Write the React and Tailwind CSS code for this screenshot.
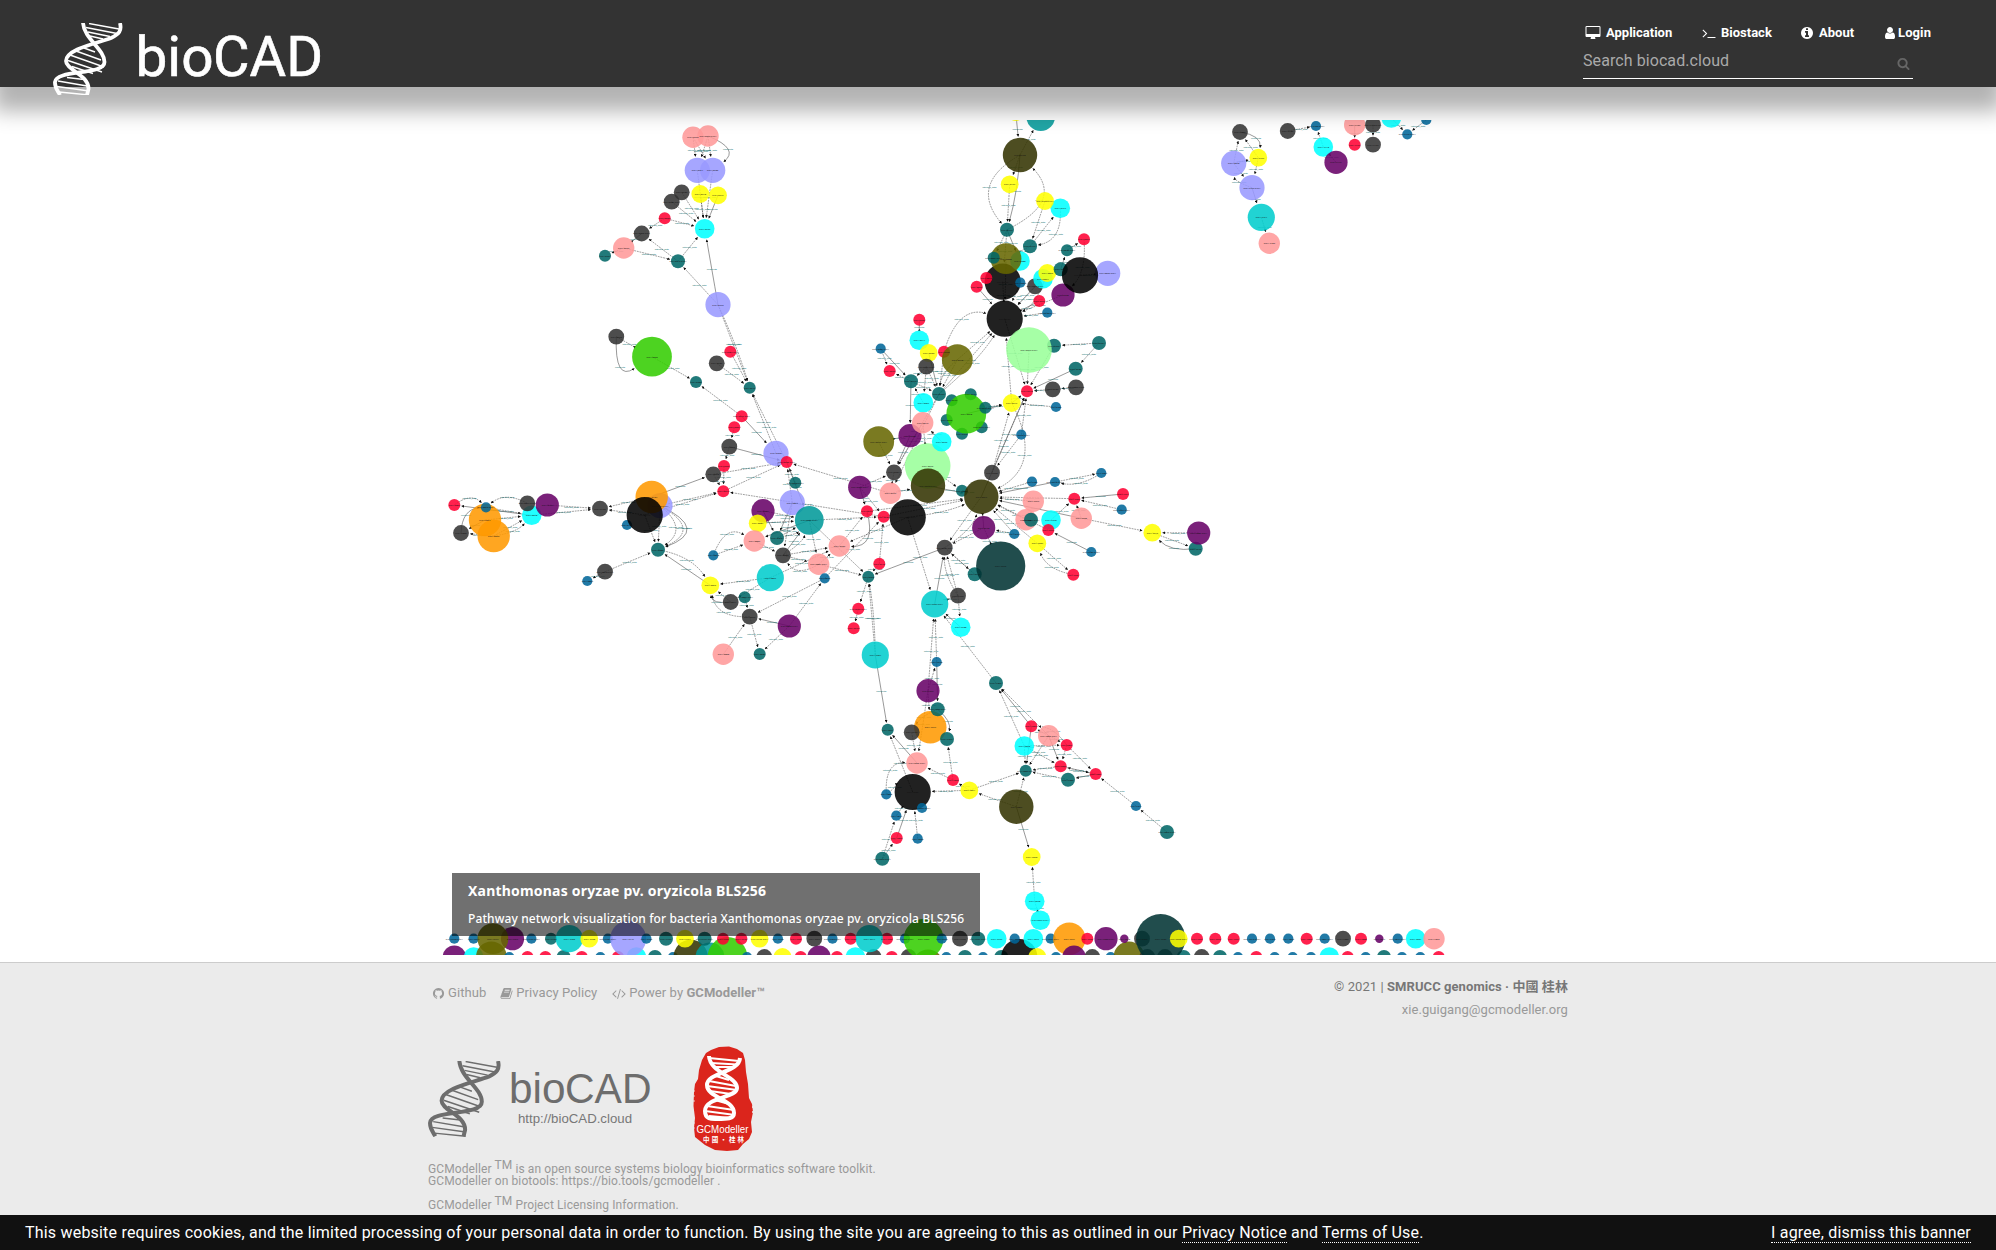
import React from "react";

const KINDS = {
  b: ["#006699", 5.1],
  r: ["#ff0033", 6],
  t: ["#006666", 6],
  T: ["#006666", 7],
  g: ["#333333", 7.9],
  y: ["#ffff00", 8.9],
  c: ["#00ffff", 9.8],
  p: ["#ff9999", 10.7],
  u: ["#660066", 11.6],
  l: ["#9999ff", 12.6],
  q: ["#00cccc", 13.6],
  e: ["#009999", 14.4],
  v: ["#666600", 15.4],
  o: ["#ff9900", 16.2],
  n: ["#333300", 17.2],
  k: ["#000000", 18.1],
  G: ["#33cc00", 19.9],
  L: ["#99ff99", 22.8],
  D: ["#003333", 24.6],
  s: ["#660066", 4.2],
  M: ["#9999ff", 18],
};

const NODES = `
p 693 137.3|p 708 136|l 697.3 170.3|l 712.7 170.3|g 681.7 192.3|g 671.7 201.7|y 700.3 194|y 718 195.3|r 664.7 218.3
g 641.7 233.5|c 704.7 228.7|p 623.7 248|t 605 255.7|T 678 261.3|l 718 304.7|g 616.3 336.7|G 652 356.7|r 730.3 351.7
g 716.7 363.3|t 696 382|t 749.7 387.7|r 741.7 416.3|r 734.3 427.3|g 729.3 446.7|l 776 453.3|r 786.7 462|g 713.3 474.3|r 724 466
r 723.3 491.3|t 795.3 482.7|u 763 510.7|l 792.3 502.7|y 757.7 523.3|e 809.3 520.3|p 754.3 541|T 777 538|g 783 555.3
p 818.7 564.3|b 824.7 578.3|b 713.3 555.3|q 770.3 577.7|t 744.7 597.3|g 730.7 602|y 710.3 585.3|g 749.7 616.7|u 789.3 626
p 723.3 654.3|t 759.7 654|T 658 549.7|g 605 571.7|b 587.3 581|r 454.3 505|o 485 520|b 486 507.3|o 493.7 536|g 461 533
c 531.7 515.3|g 527.3 503.3|u 547.3 505|g 600 508.7|b 627 525|l 660 505.7|o 651.7 497|k 644.7 515
y 1015.7 112|e 1040.7 116.5|n 1020 155|y 1009.7 184.3|c 1060.3 208.3|y 1045 201|T 1007 229.7|T 1030 246.3|r 1084 239.3|t 1067 250.3
k 1002.7 281.7|c 1020 261|v 1006 258.7|t 993.7 257.7|r 986.3 278|b 1020.3 282.7|r 976.7 286.7|g 1035 286.3|c 1043 278.7|y 1047.3 273
T 1060.7 269.3|l 1107.7 273.3|u 1063 295|k 1080 275.3|r 1039.3 301|b 1047.3 312.7|k 1004.7 318.7|r 919.3 319.7|c 919.3 340.3
b 880.7 348.7|y 928.7 353|r 944 351.7|v 957.3 359.7|g 926.3 366.7|r 889.7 371|T 911 381.3|T 1054 345.7|L 1029 350|T 1099 343
T 1075.7 368.7|g 1052.7 389.3|g 1076 387.3|r 1027 391.3|y 1011.7 403|b 1056 407|b 1021.3 434.7|T 939 394|t 951.7 400.3|t 970.7 394.3
t 981.7 427.3|t 962 433.7|t 946.7 420|G 966.3 413.7|t 985.3 407.7|c 923.3 402.7|u 910 435.7|p 922.7 422.7|v 878.7 441.7
g 894 472.3|L 927.7 466|c 941.7 441.7|n 928 485.7|g 992 472.7|t 962 490.7|n 981.3 496.7|u 859.7 487.3|p 890.3 493.3|r 867 511.3
r 883.7 516.7|k 907.7 517.3|p 839.3 546|r 879.3 563.7|t 868.3 576.7|r 858.3 608.7|r 853.7 628.3|u 983.7 527.7|b 1014.3 534
g 944.7 547.7|T 974.7 574.3|D 1000.7 566|g 958 595.7|q 934.7 604|c 960.7 627.3|q 875.3 655|b 1032 481.7|b 1055 482|b 1101.3 473
r 1074.3 498.7|r 1123 494|b 1121.7 509.7|p 1033.3 501.3|p 1026 519.7|c 1051 520|T 1031 519.7|r 1048.3 530|p 1081.3 518.3
y 1037.3 543.3|b 1091.3 552|r 1073.3 574.7|y 1152.3 532.7|T 1195.7 548.7|u 1198.7 533
b 936.7 662|u 928 690.7|o 930.3 727.3|T 937.7 709.3|g 911.7 732.3|T 947 739|t 887.7 729.7|p 917 763|r 953 780|k 912.7 792
b 886.3 794.3|b 922 808|b 896.3 815.7|b 917.7 838.7|r 896.7 838|T 882.3 858.7|y 969.3 790.3|T 996 683|r 1031.3 726.3|p 1048.7 735.7
c 1024.3 746|r 1066.7 745|r 1060.7 766.3|t 1025.7 770.7|T 1068 779.7|r 1095.7 774|b 1136 806|T 1167 832|n 1016.3 806.7
y 1031.7 857|c 1034.7 901.3|c 1040.3 920.3
g 1240 132|l 1233.7 163.3|y 1258.3 157.7|l 1252 187.7|q 1261.3 217.3|p 1269.3 243.3|g 1287.7 131|b 1316 126|c 1323.3 147
u 1336 162.3|p 1354.7 124.7|g 1373 124.7|r 1354.7 144.7|g 1373 144.7|c 1391.3 118|b 1407.3 134.3|b 1426.3 120
u 454.3 957|c 473.6 957|v 491.4 957|b 509.3 957|r 527.5 957|r 545.4 957|T 563.6 957|r 581.8 957|b 600.4 957|r 618 957
c 636.4 957|T 655 957|b 673 957|n 690.7 957|e 710 957|G 727.5 957|b 747 957|g 764.3 957|y 782.5 957|r 800.7 957|u 819 957
r 837 957|c 855.4 957|g 873.6 957|r 891.8 957|g 908.6 957|v 928 965|b 946.4 957|T 965 957|b 983 957|T 1001.3 957|k 1019.3 957
y 1037.3 957|b 1056 957|g 1092.3 957|b 1110.7 957|v 1129 957|g 1147.3 957|g 1165 957|T 1183.7 957|g 1201.7 957
T 1220 957|b 1238 957|r 1256.3 957|b 1274.7 957|b 1292.7 957|b 1311 957|c 1329.3 957|r 1347.7 957|b 1365.7 957|T 1384 957
b 1402 957|b 1420.3 957|r 1438.7 957
b 454.3 938.7|b 473.6 938.7|u 512.5 938.7|v 492.9 938.7|b 531.4 938.7|t 551 938.7|q 569.3 938.7|y 589.3 938.7|b 607.9 938.7
M 628.2 938.7|b 646.4 938.7|T 666 938.7|T 704.6 938.7|y 685 938.7|r 723 938.7|r 741.4 938.7|y 759.6 938.7|b 777.9 938.7|r 796 938.7
g 814.3 938.7|b 832.5 938.7|r 850.7 938.7|r 887 938.7|q 869.3 938.7|b 905 938.7|G 923.6 938.7|b 941.8 938.7|g 960 938.7|T 978.2 938.7
c 996.7 938.7|b 1014.7 938.7|c 1033.3 938.7|b 1050.7 938.7|o 1069.3 938.7|r 1087.3 938.7|u 1074 957|u 1106 938.7|s 1124.3 938.7
g 1142 938.7|D 1160.7 938.7|y 1178.7 938.7|r 1197 938.7|r 1215.3 938.7|r 1233.7 938.7|b 1252 938.7|b 1270 938.7|b 1288.3 938.7
r 1306.7 938.7|b 1324.7 938.7|g 1343 938.7|r 1361 938.7|s 1379.3 938.7|b 1397.7 938.7|c 1415.7 938.7|p 1434 938.7`
  .trim()
  .split(/[|\n]/)
  .map((s) => {
    const [kind, x, y] = s.trim().split(" ");
    return { fill: KINDS[kind][0], r: KINDS[kind][1], x: +x, y: +y };
  });

/* from x, from y, to x, to y, bend */
const EDGES = `
693 137 697 170|708 136 713 170|708 136 697 170|708 136 713 170 -30|693 137 713 170|697 170 705 229|713 170 705 229|700 194 705 229
718 195 705 229|682 192 705 229|672 202 705 229|665 218 705 229|665 218 642 233|642 233 624 248|624 248 605 256|624 248 678 261
678 261 642 233|678 261 705 229|718 305 705 229|718 305 678 261|718 305 750 388|718 305 750 388 -3|616 337 652 357|616 337 652 357 40
652 357 696 382|730 352 750 388|717 363 750 388|742 416 696 382|742 416 776 453|776 453 750 388|787 462 750 388|734 427 729 447
729 447 724 466|729 447 787 462|713 474 787 462|723 491 787 462|724 466 723 491|713 474 723 491|652 497 713 474|660 506 723 491
645 515 723 491|795 483 787 462|792 503 787 462|787 462 809 520|890 493 787 462|884 517 723 491|454 505 486 507 -14|527 503 486 507 14
461 533 486 507 -16|486 507 532 515|485 520 532 515|494 536 532 515 8|494 536 532 515|532 515 454 505|532 515 600 509|547 505 600 509
645 515 600 509|652 497 600 509|485 520 461 533|494 536 461 533|660 506 658 550|660 506 658 550 -44|660 506 658 550 -30|660 506 658 550 -52
645 515 658 550|605 572 658 550|605 572 587 581|658 550 710 585 -14|710 585 658 550|770 578 710 585|770 578 731 602|731 602 710 585
750 617 710 585 -22|731 602 710 585 -14|745 597 750 617|825 578 750 617|723 654 750 617|750 617 760 654|789 626 750 617|789 626 760 654
789 626 825 578|713 555 754 541|713 555 754 541 -26|763 511 777 538|763 511 809 520|758 523 809 520|777 538 809 520|777 538 809 520 6
783 555 809 520|783 555 809 520 8|783 555 819 564|819 564 783 555 -18|754 541 783 555|792 503 777 538|792 503 783 555|809 520 819 564
809 520 884 517|809 520 868 577|809 520 754 541|770 578 839 546|783 555 839 546|819 564 839 546|839 546 867 511|867 511 839 546 -30
819 564 868 577|825 578 884 517|860 487 894 472|860 487 884 517|860 487 867 511|879 564 884 517|879 564 868 577|907 517 839 546
907 517 935 604|945 548 868 577|868 577 858 609|858 609 854 628|875 655 868 577|875 655 868 577 3|875 655 888 730|884 517 981 497
867 511 981 497|907 517 981 497 6|890 493 928 486|928 486 981 497|894 472 890 493|962 491 981 497|928 466 962 491|879 442 894 472
910 436 894 472|923 423 894 472|939 394 894 472|939 394 890 493|910 436 879 442|911 381 910 436|923 423 928 466|942 442 923 423
923 403 911 381|911 381 939 394|881 349 911 381|881 349 890 371|911 381 890 371|926 367 911 381|926 367 939 394|929 353 939 394
944 352 939 394|957 360 939 394|957 360 939 394 8|926 367 923 403|919 320 919 340|957 360 1005 319|939 394 1005 319|939 394 1005 319 8
944 352 1005 319 -34|966 414 1012 403|985 408 1012 403|1012 403 1005 319|1029 350 1027 391|1054 346 1027 391|1076 369 1027 391
1099 343 1054 346|1099 343 1076 369|1053 389 1027 391|1076 387 1053 389|1012 403 1027 391|1056 407 1012 403|1021 435 992 473
1021 435 1027 391|992 473 1027 391|981 497 1027 391|992 473 1012 403|1012 403 981 497 -50|1005 319 1027 391|1020 155 1010 184
1016 112 1020 155|1020 155 1041 116|1020 155 1007 230 46|1007 230 1020 155 52|1010 184 1007 230|1020 155 1007 230 -4|1045 201 1030 246
1030 246 1060 208|1060 208 1030 246 -22|1007 230 1003 282|1007 230 1020 261|1030 246 1006 259|1007 230 994 258|1003 282 1005 319
1006 259 1005 319|977 287 1005 319|1020 283 1005 319|1035 286 1005 319|1043 279 1005 319|1047 273 1005 319 -14|1061 269 1067 250
1067 250 1084 239|1084 239 1063 295 -14|1080 275 1108 273|1063 295 1005 319|1039 301 1005 319|1047 313 1005 319|981 497 945 548
945 548 981 497 12|984 528 945 548|984 528 981 497|1014 534 984 528|945 548 975 574|975 574 945 548|984 528 1001 566|935 604 945 548
958 596 945 548|958 596 945 548 -8|958 596 935 604|958 596 961 627|961 627 935 604|928 691 935 604|937 662 935 604|996 683 935 604
928 691 937 662|937 662 938 709|928 691 930 727|928 691 917 763|912 732 917 763|938 709 912 732 6|938 709 947 739 -10|953 780 947 739
953 780 917 763|969 790 953 780|969 790 913 792|917 763 888 730|913 792 888 730|886 794 917 763 -24|886 794 913 792 -8|896 816 913 792
897 838 913 792|918 839 913 792|882 859 897 838|882 859 896 816|1032 482 981 497|1055 482 981 497|1055 482 1101 473|1101 473 1055 482 -10
1033 501 981 497|1074 499 981 497|1123 494 1074 499|1122 510 1074 499|1026 520 981 497|1051 520 1074 499|1081 518 1074 499
1081 518 981 497|1081 518 1152 533|1048 530 981 497|1037 543 981 497|1014 534 981 497|1091 552 1048 530|1037 543 1073 575
1073 575 1037 543 -14|1199 533 1152 533|1152 533 1196 549|1196 549 1152 533 -12|969 790 1026 771|1016 807 969 790|1016 807 1026 771
1024 746 996 683|1031 726 996 683|1049 736 996 683|1049 736 1031 726|1067 745 1031 726 10|1049 736 1067 745|1049 736 1061 766
1049 736 1026 771|1024 746 1061 766|1024 746 1067 745|1024 746 1026 771|1031 726 1026 771|1067 745 1061 766|1061 766 1026 771
1068 780 1026 771|1096 774 1061 766|1096 774 1068 780|1067 745 1096 774|1061 766 1096 774|1136 806 1096 774|1167 832 1136 806
1016 807 1032 857|1035 901 1032 857|1035 901 1040 920|1234 163 1240 132|1258 158 1240 132|1240 132 1258 158 -16|1234 163 1258 158
1234 163 1252 188|1252 188 1234 163 -10|1258 158 1252 188|1252 188 1261 217|1261 217 1269 243|1288 131 1316 126|1323 147 1316 126
1336 162 1323 147|1355 125 1355 145|1373 125 1373 145|1391 118 1407 134|1426 120 1407 134`
  .trim()
  .split(/[|\n]/)
  .map((s) => s.trim().split(" ").map(Number));

function nearest(x, y) {
  let best = NODES[0];
  let d = Infinity;
  for (const n of NODES) {
    const k = (n.x - x) ** 2 + (n.y - y) ** 2;
    if (k < d) {
      d = k;
      best = n;
    }
  }
  return best;
}

const labelFits = (y) => y > 124 && y < 951;

function Edge({ edge, index }) {
  const [x1, y1, x2, y2, bend = 0] = edge;
  const a = nearest(x1, y1);
  const b = nearest(x2, y2);
  const dx = b.x - a.x;
  const dy = b.y - a.y;
  const len = Math.hypot(dx, dy) || 1;
  const cx = (a.x + b.x) / 2 + (dy / len) * -bend;
  const cy = (a.y + b.y) / 2 + (dx / len) * bend;
  const ex = b.x - cx;
  const ey = b.y - cy;
  const el = Math.hypot(ex, ey) || 1;
  const tx = b.x - (ex / el) * (b.r + 1.5);
  const ty = b.y - (ey / el) * (b.r + 1.5);
  const lx = (a.x + 2 * cx + tx) / 4;
  const ly = (a.y + 2 * cy + ty) / 4;
  const solid = index % 5 === 3;
  return (
    <g>
      <path
        d={`M${a.x} ${a.y}Q${cx} ${cy} ${tx} ${ty}`}
        fill="none"
        stroke="#444"
        strokeWidth="0.55"
        strokeDasharray={solid ? "none" : "1.8 0.9"}
        markerEnd="url(#tip)"
      />
      {labelFits(ly) && (
        <text x={lx} y={ly + 1} fontSize="2.5" textAnchor="middle" fill="#006666">
          {solid ? "connects" : "interact_with"}
        </text>
      )}
    </g>
  );
}

function Network() {
  return (
    <svg
      className="block h-[835px] w-[1010px] font-['Liberation_Sans',sans-serif]"
      viewBox="440 120 1010 835"
    >
      <defs>
        <marker id="tip" viewBox="0 0 4 4" refX="3.4" refY="2" markerWidth="2.9" markerHeight="2.9" markerUnits="userSpaceOnUse" orient="auto">
          <path d="M0 0L4 2L0 4Z" fill="#111" />
        </marker>
      </defs>
      {EDGES.map((e, i) => (
        <Edge key={i} edge={e} index={i} />
      ))}
      {NODES.map((n, i) => (
        <circle key={i} cx={n.x} cy={n.y} r={n.r} fill={n.fill} fillOpacity="0.87" />
      ))}
      {NODES.map(
        (n, i) =>
          labelFits(n.y) && (
            <text key={i} x={n.x} y={n.y + 0.9} fontSize="2.4" textAnchor="middle" fill="#111">
              {i % 4 === 1 ? "PWY" + (5000 + i * 7) + "-PWY" : "PWY-" + (5000 + i * 7)}
            </text>
          ),
      )}
    </svg>
  );
}

const ICONS = {
  desktop:
    "M1728 992v-832q0-13-9.5-22.5t-22.5-9.5h-1600q-13 0-22.5 9.5t-9.5 22.5v832q0 13 9.5 22.5t22.5 9.5h1600q13 0 22.5-9.5t9.5-22.5zm128-832v1088q0 66-47 113t-113 47h-544q0 37 16 77.5t32 71 16 43.5q0 26-19 45t-45 19h-512q-26 0-45-19t-19-45q0-14 16-44t32-70 16-78h-544q-66 0-113-47t-47-113v-1088q0-66 47-113t113-47h1600q66 0 113 47t47 113z",
  terminal:
    "M649 983l-466 466q-10 10-23 10t-23-10l-50-50q-10-10-10-23t10-23l393-393-393-393q-10-10-10-23t10-23l50-50q10-10 23-10t23 10l466 466q10 10 10 23t-10 23zm1079 457v64q0 14-9 23t-23 9h-960q-14 0-23-9t-9-23v-64q0-14 9-23t23-9h960q14 0 23 9t9 23z",
  info: "M1152 1376v-160q0-14-9-23t-23-9h-96v-512q0-14-9-23t-23-9h-320q-14 0-23 9t-9 23v160q0 14 9 23t23 9h96v320h-96q-14 0-23 9t-9 23v160q0 14 9 23t23 9h448q14 0 23-9t9-23zm-128-896v-160q0-14-9-23t-23-9h-192q-14 0-23 9t-9 23v160q0 14 9 23t23 9h192q14 0 23-9t9-23zm640 416q0 209-103 385.5t-279.5 279.5-385.5 103-385.5-103-279.5-279.5-103-385.5 103-385.5 279.5-279.5 385.5-103 385.5 103 279.5 279.5 103 385.5z",
  user: "M1536 1399q0 109-62.5 187t-150.5 78h-854q-88 0-150.5-78t-62.5-187q0-85 8.5-160.5t31.5-152 58.5-131 94-89 134.5-34.5q131 128 313 128t313-128q76 0 134.5 34.5t94 89 58.5 131 31.5 152 8.5 160.5zm-256-887q0 159-112.5 271.5t-271.5 112.5-271.5-112.5-112.5-271.5 112.5-271.5 271.5-112.5 271.5 112.5 112.5 271.5z",
  search:
    "M1216 832q0-185-131.5-316.5t-316.5-131.5-316.5 131.5-131.5 316.5 131.5 316.5 316.5 131.5 316.5-131.5 131.5-316.5zm512 832q0 52-38 90t-90 38q-54 0-90-38l-343-342q-179 124-399 124-143 0-273.5-55.5t-225-150-150-225-55.5-273.5 55.5-273.5 150-225 225-150 273.5-55.5 273.5 55.5 225 150 150 225 55.5 273.5q0 220-124 399l343 343q37 37 37 90z",
  github:
    "M896 128q209 0 385.5 103t279.5 279.5 103 385.5q0 251-146.5 451.5t-378.5 277.5q-27 5-40-7t-13-30q0-3 .5-76.5t.5-134.5q0-97-52-142 57-6 102.5-18t94-39 81-66.5 53-105 20.5-150.5q0-119-79-206 37-91-8-204-28-9-81 11t-92 44l-38 24q-93-26-192-26t-192 26q-16-11-42.5-27t-83.5-38.5-85-13.5q-45 113-8 204-79 87-79 206 0 85 20.5 150t52.5 105 80.5 67 94 39 102.5 18q-39 36-49 103-21 10-45 15t-57 5-65.5-21.5-55.5-62.5q-19-32-48.5-52t-49.5-24l-20-3q-21 0-29 4.5t-5 11.5 9 14 13 12l7 5q22 10 43.5 38t31.5 51l10 23q13 38 44 61.5t67 30 69.5 7 55.5-3.5l23-4q0 38 .5 88.5t.5 54.5q0 18-13 30t-40 7q-232-77-378.5-277.5t-146.5-451.5q0-209 103-385.5t279.5-279.5 385.5-103z",
  code: "M617 1399l-50 50q-10 10-23 10t-23-10l-466-466q-10-10-10-23t10-23l466-466q10-10 23-10t23 10l50 50q10 10 10 23t-10 23l-393 393 393 393q10 10 10 23t-10 23zm591-1067l-373 1291q-4 13-15.5 19.5t-23.5 2.5l-62-17q-13-4-19.5-15.5t-2.5-24.5l373-1291q4-13 15.5-19.5t23.5-2.5l62 17q13 4 19.5 15.5t2.5 24.5zm657 651l-466 466q-10 10-23 10t-23-10l-50-50q-10-10-10-23t10-23l393-393-393-393q-10-10-10-23t10-23l50-50q10-10 23-10t23 10l466 466q10 10 10 23t-10 23z",
  book: "M1703 478q40 57 18 129l-275 906q-19 64-76.5 107.5t-122.5 43.5h-923q-77 0-148.5-53.5t-99.5-131.5q-24-67-2-127 0-4 3-27t4-37q1-8-3-21.5t-3-19.5q2-11 8-21t16.5-23.5 16.5-23.5q23-38 45-91.5t30-91.5q3-10 .5-30t-.5-28q3-11 17-28t17-23q21-36 42-92t25-90q1-9-2.5-32t.5-28q4-13 22-30.5t22-22.5q19-26 42.5-84.5t27.5-96.5q1-8-3-25.5t-2-26.5q2-8 9-18t18-23 17-21q8-12 16.5-30.5t15-35 16-36 19.5-32 26.5-23.5 36-11.5 47.5 5.5l-1 3q38-9 51-9h761q74 0 114 56t18 130l-274 906q-36 119-71.5 153.5t-128.5 34.5h-869q-27 0-38 15-11 16-1 43 24 70 144 70h923q29 0 56-15.5t35-41.5l300-987q7-22 5-57 38 15 59 43zm-1064 2q-4 13 2 22.5t20 9.5h608q13 0 25.5-9.5t16.5-22.5l21-64q4-13-2-22.5t-20-9.5h-608q-13 0-25.5 9.5t-16.5 22.5zm-83 256q-4 13 2 22.5t20 9.5h608q13 0 25.5-9.5t16.5-22.5l21-64q4-13-2-22.5t-20-9.5h-608q-13 0-25.5 9.5t-16.5 22.5z",
};

function Icon({ name, className }) {
  return (
    <svg viewBox="0 0 1792 1792" className={"shrink-0 overflow-visible " + className} fill="currentColor">
      <path d={ICONS[name]} />
    </svg>
  );
}

function Helix({ color, bodyWidth = 3.8 }) {
  return (
    <g fill="none" stroke={color}>
      <g strokeWidth="1.4">
        <path d="M36 0.5L66 6M33 4.500L64 10.5M35 9L57 13.5M37 13L50 16" />
        <path d="M31 25L42 29M23 28L48 37M17 32L51 44M15 37.5L49 49M19 43.5L40 50.5" />
        <path d="M14 54.5L31 56.5M5 58L34 63M4 63.5L36 68M6 69L36 72" />
      </g>
      <g strokeWidth={bodyWidth}>
        <path d="M30 0C31 16 51.500 26 51.500 39C51.500 53 3 46 2 59C1.500 65 5 68 7 72" />
        <path d="M67 0C69 8 66 11 58 15C45 20 13 26 13 38C13 47 36 52 35.500 66L34 72" />
      </g>
    </g>
  );
}

function HeaderLogo() {
  return (
    <svg className="ml-[53px] mt-[23px] block h-[72px] w-[270px]" viewBox="0 0 270 72">
      <Helix color="#fff" />
      <text y="53" fontSize="56" fill="#fff" stroke="#fff" strokeWidth="0.6" className="font-['Roboto',sans-serif]">
        <tspan x="82.5" textLength="78" lengthAdjust="spacingAndGlyphs">bio</tspan>
        <tspan x="160" textLength="110" lengthAdjust="spacingAndGlyphs">CAD</tspan>
      </text>
    </svg>
  );
}

function FooterLogo() {
  return (
    <svg className="block h-[76px] w-[224px]" viewBox="0 0 224 76">
      <g transform="scale(1.045)">
        <Helix color="#6d6d6d" bodyWidth={3.8} />
      </g>
      <text y="41.5" fontSize="42" fill="#6d6d6d" className="font-['Liberation_Sans',sans-serif]">
        <tspan x="81" textLength="56.5" lengthAdjust="spacingAndGlyphs">bio</tspan>
        <tspan x="137" textLength="86.5" lengthAdjust="spacingAndGlyphs">CAD</tspan>
      </text>
      <text x="90" y="62" fontSize="12.500" textLength="114" lengthAdjust="spacingAndGlyphs" fill="#777" className="font-['Liberation_Sans',sans-serif]">
        http://bioCAD.cloud
      </text>
    </svg>
  );
}

function Seal() {
  return (
    <svg className="block h-[106px] w-[60px]" viewBox="0 0 60 106">
      <path
        d="M18 4L26 1L36 0.500L44 3L50 7L52 14L53 26L55 38L56 52L59 58L60 66L58 76L59 86L56 93L50 98L45 104L34 105L22 104L12 99L7 95L2 91L1 82L2 72L0.500 60L1 46L2 38L5 33L6 24L9 14L13 7Z"
        fill="#db251c"
      />
      <path d="M1 44V58M59.500 60V70M1 76V86" stroke="#ebebeb" strokeWidth="0.800" strokeDasharray="2 3" />
      <g fill="none" stroke="#fff" strokeWidth="1.900">
        <path d="M16 12L46 15M18 17L44 18.500M20 21L40 21M23 30L36 34M16 35L43 40M14 40L44 44M17 45L38 48M22 54L36 58M14 60L41 64M12 65L42 69M16 70L38 72" />
      </g>
      <g fill="none" stroke="#fff" strokeWidth="4">
        <path d="M16 10C17 27 44 30 44 42C44 52 12 51 12 65C12 74 20 73 24 73" />
        <path d="M47 12C46 27 14 26 14 39C14 52 41 53 41 67C41 73 34 73 24 73" />
      </g>
      <text x="3.5" y="87" fontSize="11" textLength="52" lengthAdjust="spacingAndGlyphs" fill="#fff" className="font-['Liberation_Sans',sans-serif]">
        GCModeller
      </text>
      <text x="10" y="96" fontSize="6.500" fontWeight="700" textLength="41" fill="#fff" className="font-['Noto_Sans_CJK_TC',sans-serif]">
        中國·桂林
      </text>
    </svg>
  );
}

function NavLink({ icon, label, gap, className }) {
  return (
    <a className={"flex items-center " + gap + " " + className}>
      <Icon name={icon} className="h-[14px] w-[14px]" />
      <span>{label}</span>
    </a>
  );
}

function Header() {
  return (
    <header className="relative z-10 flex h-[87px] items-start justify-between bg-[#333] shadow-[0_17px_20px_7px_rgba(0,0,0,0.3)]">
      <HeaderLogo />
      <div className="w-[413px] pt-[25px]">
        <nav className="flex h-4 text-[13px] leading-4 font-bold text-white">
          <NavLink icon="desktop" label="Application" gap="gap-[6px]" className="ml-[3px] w-[116px]" />
          <NavLink icon="terminal" label="Biostack" gap="gap-[5px]" className="w-[98px]" />
          <NavLink icon="info" label="About" gap="gap-[5px]" className="w-[83px]" />
          <NavLink icon="user" label="Login" gap="gap-[1px]" className="tracking-[0.1px]" />
        </nav>
        <div className="flex h-[38px] w-[330px] items-center justify-between border-b border-white text-base tracking-[0.08px] text-[#aaa]">
          <span className="mt-[2px]">Search biocad.cloud</span>
          <Icon name="search" className="mt-[7px] mr-[3px] h-[13px] w-[13px] text-[#666]" />
        </div>
      </div>
    </header>
  );
}

function Footer() {
  return (
    <footer className="h-[288px] border-t border-[#ccc] bg-[#ebebeb] pl-[428px] text-[13px] text-[#999]">
      <div className="flex h-[60px] w-[1140px] items-start justify-between tracking-[0.07px]">
        <div className="mt-[22px] flex h-4 items-center pl-1 leading-4">
          <Icon name="github" className="h-[13px] w-[13px]" />
          <span className="ml-[3px]">Github</span>
          <Icon name="book" className="ml-[14px] h-[13px] w-[13px]" />
          <span className="ml-[3px]">Privacy Policy</span>
          <Icon name="code" className="ml-[15px] h-[13px] w-[13px]" />
          <span className="ml-[4px]">
            Power by <b>GCModeller™</b>
          </span>
        </div>
        <div className="mt-[12px] text-right leading-[23px]">
          <div className="text-[#777]">
            © 2021 |{" "}
            <b className="font-['Roboto','Noto_Sans_CJK_TC',sans-serif]">SMRUCC genomics · 中國 桂林</b>
          </div>
          <div>xie.guigang@gcmodeller.org</div>
        </div>
      </div>
      <div className="mt-[23px] flex items-start">
        <div className="mt-[15px]">
          <FooterLogo />
        </div>
        <div className="ml-[41px]">
          <Seal />
        </div>
      </div>
      <div className="mt-[11px] text-xs leading-3 tracking-[0.1px] whitespace-nowrap">
        <p>
          GCModeller <span className="relative -top-[4px]">TM</span> is an open source systems biology bioinformatics software toolkit.
          <br />
          GCModeller on biotools: https://bio.tools/gcmodeller .
        </p>
        <p className="mt-3">
          GCModeller <span className="relative -top-[4px]">TM</span> Project Licensing Information.
        </p>
      </div>
    </footer>
  );
}

export default function App() {
  return (
    <div className="relative h-[1250px] w-[1996px] overflow-hidden bg-white font-['Roboto',sans-serif]">
      <Header />
      <main className="h-[875px] pt-[33px] pl-[440px]">
        <div className="relative w-[1010px]">
          <Network />
          <div className="absolute top-[753px] left-[12px] h-[63px] w-[528px] bg-black/56 pl-4 font-['Noto_Sans',sans-serif] whitespace-nowrap text-white">
            <h3 className="mt-[8px] text-[14px] leading-5 font-bold tracking-[0.2px]">Xanthomonas oryzae pv. oryzicola BLS256</h3>
            <p className="mt-[8px] text-[12px] leading-5 font-medium tracking-[0.11px]">
              Pathway network visualization for bacteria Xanthomonas oryzae pv. oryzicola BLS256
            </p>
          </div>
        </div>
      </main>
      <Footer />
      <div className="absolute inset-x-0 bottom-0 flex h-[35px] items-center justify-between bg-[#111] pr-[25px] pl-[25px] text-base leading-[21px] tracking-[0.2px] whitespace-nowrap text-white">
        <span>
          This website requires cookies, and the limited processing of your personal data in order to function. By using the site you are agreeing to this as outlined in our{" "}
          <a className="border-b border-dotted border-white">Privacy Notice</a> and{" "}
          <a className="border-b border-dotted border-white">Terms of Use</a>.
        </span>
        <span>
          <a className="border-b border-dotted border-white">I agree, dismiss this banner</a>
        </span>
      </div>
    </div>
  );
}
